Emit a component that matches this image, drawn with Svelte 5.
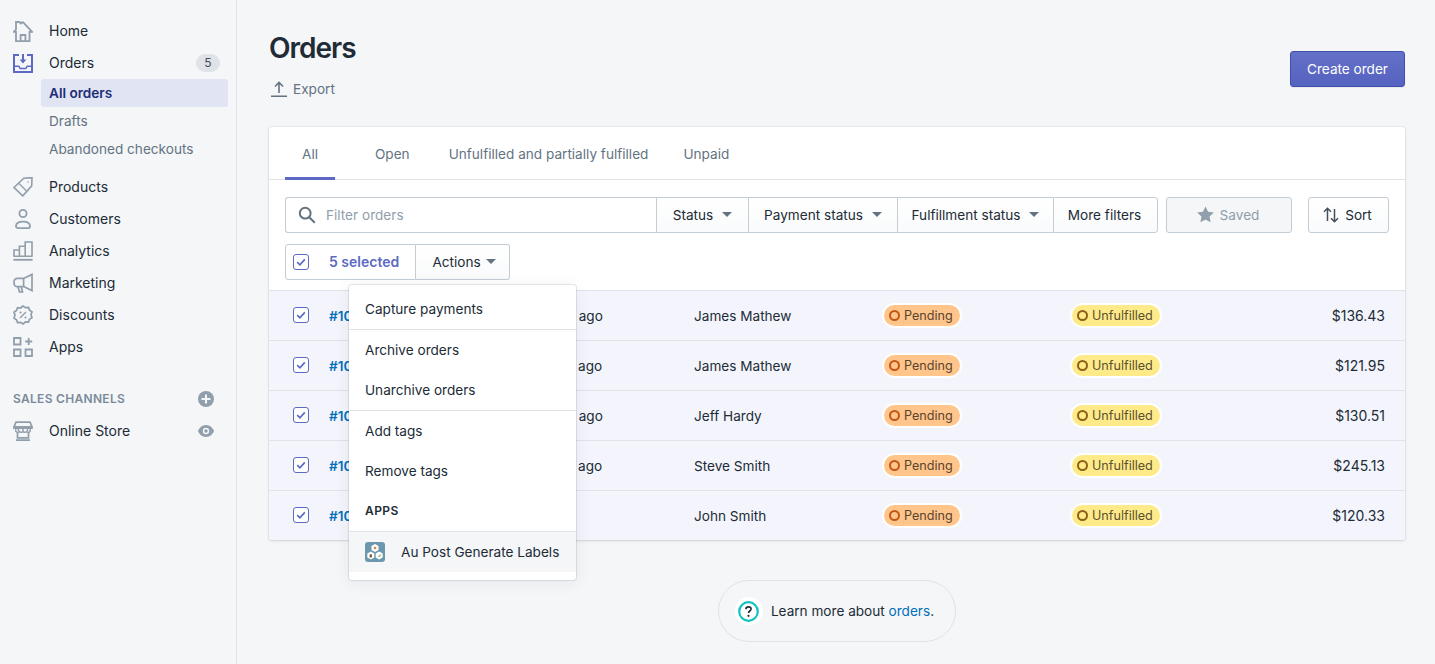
<script lang="ts">
  const orders = [
    { id: "#1005", date: "an hour ago", customer: "James Mathew", total: "$136.43" },
    { id: "#1004", date: "18 mins ago", customer: "James Mathew", total: "$121.95" },
    { id: "#1003", date: "an hour ago", customer: "Jeff Hardy", total: "$130.51" },
    { id: "#1002", date: "18 mins ago", customer: "Steve Smith", total: "$245.13" },
    { id: "#1001", date: "now", customer: "John Smith", total: "$120.33" },
  ];

  const tabs = ["All", "Open", "Unfulfilled and partially fulfilled", "Unpaid"];
  const filters = ["Status", "Payment status", "Fulfillment status"];
</script>

{#snippet check()}
  <span class="checkbox">
    <svg viewBox="0 0 16 16" width="16" height="16" fill="none">
      <path d="M4.2 8.2l2.7 2.6 4.9-5.4" stroke="#5c6ac4" stroke-width="1.7" />
    </svg>
  </span>
{/snippet}

{#snippet caret()}
  <svg class="caret" viewBox="0 0 10 5" width="10" height="5"><path d="M0 0h10L5 5z" fill="#637381" /></svg>
{/snippet}

<div class="page">
  <nav class="sidebar">
    <a class="nav-item">
      <svg viewBox="0 0 20 21" width="20" height="21" fill="none" stroke="#919eab" stroke-width="1.8">
        <path d="M.8 10.800L3 8.400V1h3.400l1.400 1.400.9-.9h1.600l8.800 9.300h-2.600v9.300H3V10.800H.8z" />
        <path d="M7.600 20v-6h4.800v6" />
      </svg>
      <span>Home</span>
    </a>
    <a class="nav-item">
      <svg viewBox="0 0 20 20" width="20" height="20" fill="none">
        <path d="M6 2H1v17h18V2h-5" stroke="#5c6ac4" stroke-width="2" />
        <path d="M1 12.500h5.200l1.400 2.300h4.800l1.400-2.300H19V14h-4.400l-1.400 2.300H6.800L5.400 14H1z" fill="#5c6ac4" />
        <path d="M10 1v7" stroke="#5c6ac4" stroke-width="2" />
        <path d="M6.600 6.600L10 10.400l3.400-3.800z" fill="#5c6ac4" />
      </svg>
      <span>Orders</span>
      <span class="count">5</span>
    </a>
    <div class="subnav">
      <a class="sub-item active">All orders</a>
      <a class="sub-item">Drafts</a>
      <a class="sub-item">Abandoned checkouts</a>
    </div>
    <a class="nav-item">
      <svg viewBox="0 0 20 20" width="20" height="20" fill="none" stroke="#919eab" stroke-width="1.6">
        <path d="M1 10.500L10.800 1.200l8.200-.6-.3 8.300-8.900 10z" />
        <path d="M6 6.500l7.500 7.500" stroke-width="1.200" />
        <circle cx="15" cy="5" r=".8" fill="#919eab" stroke="none" />
      </svg>
      <span>Products</span>
    </a>
    <a class="nav-item">
      <svg viewBox="0 0 20 20" width="20" height="20" fill="none" stroke="#919eab" stroke-width="1.800">
        <circle cx="10" cy="4.500" r="3.600" />
        <path d="M3 17.200c0-3 3-4.600 7-4.600s7 1.600 7 4.600c0 1.300-1 1.900-2 1.900H5c-1 0-2-.6-2-1.900z" />
      </svg>
      <span>Customers</span>
    </a>
    <a class="nav-item">
      <svg viewBox="0 0 20 20" width="20" height="20" fill="none" stroke="#919eab" stroke-width="1.600">
        <path d="M1 15.200V9h5.400v6.200M6.400 15.200V5.200h5.800v10M12.200 15.200V1h6.800v14.200M.4 15.200h19.200" />
        <path d="M.4 18.800h19.200" stroke-width="1.800" />
      </svg>
      <span>Analytics</span>
    </a>
    <a class="nav-item">
      <svg viewBox="0 0 20 20" width="20" height="20" fill="none" stroke="#919eab" stroke-width="1.700">
        <path d="M19 1.400v16.200l-8.400-4H4.400A3.400 3.400 0 0 1 1 10.200V8.800a3.400 3.400 0 0 1 3.400-3.400h6.200z" />
        <path d="M10.600 5.400v8.200M5 13.800l1.500 5h3l-1.200-5" />
      </svg>
      <span>Marketing</span>
    </a>
    <a class="nav-item">
      <svg viewBox="0 0 20 20" width="20" height="20" fill="none" stroke="#919eab" stroke-width="1.700">
        <path d="M10 1l2.500 1.600 3-.3 1 2.800 2.500 1.700-1 2.900 1 2.900-2.500 1.700-1 2.800-3-.3L10 19l-2.500-1.700-3 .3-1-2.800L1 13.100l1-3-1-2.900 2.500-1.700 1-2.800 3 .3z" />
        <path d="M7 13l6-6" stroke-width="1.500" />
        <circle cx="7.500" cy="7.500" r="1.100" fill="#919eab" stroke="none" />
        <circle cx="12.500" cy="12.500" r="1.100" fill="#919eab" stroke="none" />
      </svg>
      <span>Discounts</span>
    </a>
    <a class="nav-item">
      <svg viewBox="0 0 20 20" width="20" height="20" fill="none" stroke="#919eab" stroke-width="1.800">
        <path d="M1 1h6.500v6.500H1zM1 12.500h6.500V19H1zM12.500 12.500H19V19h-6.500z" />
        <path d="M15.700 1v7M12.200 4.500h7" />
      </svg>
      <span>Apps</span>
    </a>
    <div class="channels">
      <span>SALES CHANNELS</span>
      <svg viewBox="0 0 16 16" width="16" height="16">
        <circle cx="8" cy="8" r="8" fill="#919eab" />
        <path d="M8 3.500v9M3.500 8h9" stroke="#f4f6f8" stroke-width="2" />
      </svg>
    </div>
    <a class="nav-item">
      <svg viewBox="0 0 20 20" width="20" height="20" fill="none" stroke="#919eab" stroke-width="1.700">
        <path d="M3 1.200h14l2 4.600v1.400H1V5.800zM1 5.800h18" />
        <path d="M5.500 7v3M10 7v3M14.500 7v3M2.800 7.200v3.300c1.400 1 2.800 1 3.600 0 1.100 1 2.500 1 3.600 0 1.100 1 2.500 1 3.600 0 .8 1 2.200 1 3.600 0V7.200" stroke-width="1.400" />
        <path d="M4.500 11v5.800h11V11M3 19.100h14" />
      </svg>
      <span>Online Store</span>
      <svg class="eye" viewBox="0 0 16 12" width="16" height="12">
        <path d="M8 0c3.800 0 6.800 2.800 8 6-1.200 3.200-4.200 6-8 6S1.200 9.200 0 6c1.200-3.200 4.200-6 8-6z" fill="#919eab" />
        <circle cx="8" cy="6" r="3.200" fill="#f4f6f8" />
        <circle cx="8" cy="6" r="1.700" fill="#919eab" />
      </svg>
    </a>
  </nav>

  <main class="main">
    <header class="page-header">
      <div>
        <h1>Orders</h1>
        <a class="export">
          <svg viewBox="0 0 16 16" width="16" height="16" fill="none" stroke="#637381" stroke-width="1.600">
            <path d="M8 12V2M4 5.500L8 1.500l4 4M0 15.200h16" />
          </svg>
          Export
        </a>
      </div>
      <button class="primary">Create order</button>
    </header>

    <section class="card">
      <div class="tabs">
        {#each tabs as tab, i}
          <a class="tab" class:current={i === 0}>{tab}</a>
        {/each}
      </div>

      <div class="filters">
        <div class="filter-group">
          <div class="search">
            <svg viewBox="0 0 18 18" width="18" height="18" fill="none" stroke="#637381" stroke-width="2">
              <circle cx="7.200" cy="7.200" r="5.400" />
              <path d="M11.200 11.200l5.600 5.600" />
            </svg>
            <span>Filter orders</span>
          </div>
          {#each filters as f}
            <button class="filter">{f}{@render caret()}</button>
          {/each}
          <button class="filter more">More filters</button>
        </div>
        <button class="saved">
          <svg viewBox="0 0 18 18" width="17" height="17"><path d="M9 .5l2.700 5.600 6.100.8-4.500 4.300 1.100 6.100L9 14.400l-5.400 2.900 1.100-6.100L.2 6.900l6.100-.8z" fill="#919eab" /></svg>
          Saved
        </button>
        <button class="sort">
          <svg viewBox="0 0 16 16" width="16" height="16" fill="none" stroke="#454f5b" stroke-width="1.500">
            <path d="M4.500 14V1.500M1 4.800l3.500-3.500L8 4.800M11.500 2v12.500M8 11.200l3.500 3.500 3.500-3.500" />
          </svg>
          Sort
        </button>
      </div>

      <div class="bulk-row">
        <div class="bulk">
          <label class="bulk-check">
            {@render check()}
            <span>5 selected</span>
          </label>
          <button class="actions">Actions{@render caret()}</button>
        </div>
      </div>

      <div class="table">
        {#each orders as o}
          <div class="row">
            <span class="cell-check">{@render check()}</span>
            <a class="order-id">{o.id}</a>
            <span>{o.date}</span>
            <span>{o.customer}</span>
            <span><span class="badge pending"><i></i>Pending</span></span>
            <span><span class="badge unfulfilled"><i></i>Unfulfilled</span></span>
            <span class="total">{o.total}</span>
          </div>
        {/each}
      </div>

      <div class="menu">
        <div class="menu-section">
          <a class="menu-item">Capture payments</a>
        </div>
        <div class="menu-section">
          <a class="menu-item">Archive orders</a>
          <a class="menu-item">Unarchive orders</a>
        </div>
        <div class="menu-section">
          <a class="menu-item">Add tags</a>
          <a class="menu-item">Remove tags</a>
          <div class="menu-title">APPS</div>
        </div>
        <a class="menu-item app">
          <svg viewBox="0 0 20 20" width="20" height="20">
            <rect width="20" height="20" rx="3" fill="#6c98ad" />
            <path d="M10 2l3.500 2v4L10 10 6.500 8V4z" fill="#fff" />
            <path d="M5.800 9.500l3.500 2v4l-3.500 2-3.500-2v-4z" fill="#fff" />
            <path d="M14.200 9.500l3.500 2v4l-3.500 2-3.500-2v-4z" fill="#fff" />
            <path d="M8.800 4.800h2.400v2.400H8.800z" fill="#d98a3c" />
            <path d="M4.600 12.400h2.400v3H4.600z" fill="#7a5a44" />
            <path d="M13 14.500l2.400-2.200.8.800-2.400 2.200z" fill="#6fb56a" />
          </svg>
          Au Post Generate Labels
        </a>
      </div>
    </section>

    <div class="footer">
      <div class="help">
        <span class="help-icon">
          <svg viewBox="0 0 21 21" width="21" height="21" fill="none">
            <circle cx="10.500" cy="10.500" r="9.300" stroke="#12c2c0" stroke-width="2.200" />
            <path d="M7.900 8.300c0-1.500 1.100-2.400 2.600-2.400s2.600.9 2.600 2.200c0 1.900-2.600 1.900-2.600 3.800" stroke="#212b36" stroke-width="1.600" />
            <circle cx="10.500" cy="14.800" r="1.100" fill="#212b36" />
          </svg>
        </span>
        <span>Learn more about <a class="link">orders</a>.</span>
      </div>
    </div>
  </main>
</div>

<style>
  :global(body) {
    margin: 0;
    background: #f4f6f8;
    color: #212b36;
    font-family: Inter, "Liberation Sans", sans-serif;
    font-size: 13.6px;
  }

  .page {
    display: flex;
    height: 664px;
    overflow: hidden;
  }

  .sidebar {
    width: 236px;
    flex-shrink: 0;
    border-right: 1px solid #dfe3e8;
    padding-top: 15px;
  }

  .nav-item {
    display: flex;
    align-items: center;
    height: 32px;
    padding: 0 16px 0 13px;
    gap: 16px;
    font-size: 14px;
  }

  .nav-item span {
    padding-bottom: 1px;
  }

  .nav-item .eye {
    margin-left: auto;
    margin-right: 6px;
  }

  .nav-item .count {
    margin-left: auto;
    padding: 0;
    background: #dfe3e8;
    color: #454f5b;
    font-size: 12px;
    width: 24px;
    height: 18px;
    line-height: 18px;
    text-align: center;
    border-radius: 9px;
  }

  .subnav {
    padding: 0 8px 8px 41px;
  }

  .sub-item {
    display: block;
    height: 28px;
    line-height: 28px;
    padding-left: 8px;
    color: #637381;
    border-radius: 3px;
  }

  .sub-item.active {
    background: #e1e4f2;
    color: #202e78;
    font-weight: 600;
  }

  .channels {
    display: flex;
    align-items: center;
    justify-content: space-between;
    margin-top: 20px;
    padding: 0 22px 0 13px;
    height: 32px;
    font-size: 12px;
    font-weight: 600;
    letter-spacing: 0.3px;
    color: #7b8a9b;
  }

  .channels span {
    padding-bottom: 1px;
  }

  .main {
    flex: 1;
    padding: 0 30px 0 32px;
  }

  .page-header {
    display: flex;
    justify-content: space-between;
    align-items: flex-start;
    height: 127px;
  }

  h1 {
    margin: 31px 0 0;
    font-size: 28px;
    line-height: 34px;
    font-weight: 600;
    letter-spacing: -1px;
  }

  .export {
    display: flex;
    align-items: center;
    gap: 6px;
    margin: 14px 0 0 2px;
    height: 20px;
    color: #637381;
  }

  button {
    font: inherit;
    color: inherit;
    cursor: pointer;
  }

  .primary {
    margin-top: 51px;
    width: 115px;
    height: 36px;
    padding: 0 0 1px;
    border: 1px solid #3f4eae;
    border-radius: 3px;
    color: #fff;
    background: linear-gradient(180deg, #6371c7, #5563c1);
    box-shadow: 0 1px 0 rgba(22, 29, 37, 0.05);
  }

  .card {
    position: relative;
    background: #fff;
    border-radius: 3px;
    box-shadow: 0 0 0 1px rgba(63, 63, 68, 0.05), 0 1px 3px rgba(63, 63, 68, 0.15);
  }

  .tabs {
    display: flex;
    height: 52px;
    padding-left: 16px;
    border-bottom: 1px solid #dfe3e8;
  }

  .tab {
    position: relative;
    display: flex;
    align-items: center;
    justify-content: center;
    margin-right: 23px;
    padding: 2px 17px 0;
    color: #637381;
  }

  .tab:nth-child(2) {
    margin-right: 5px;
  }

  .tab:nth-child(3) {
    margin-right: 1px;
  }

  .tab.current::after {
    content: "";
    position: absolute;
    left: 0;
    right: 0;
    bottom: -1px;
    height: 3px;
    background: #5c6ac4;
  }

  .filters {
    display: flex;
    padding: 17px 16px 0;
  }

  .filter-group {
    display: grid;
    grid-template-columns: 1fr 92px 149px 156px 105px;
    height: 36px;
    width: 873px;
    flex-shrink: 0;
  }

  .search {
    display: flex;
    align-items: center;
    gap: 10px;
    padding-left: 12px;
    border: 1px solid #c4cdd5;
    border-right: 0;
    border-radius: 3px 0 0 3px;
    color: #919eab;
  }

  .filter {
    display: flex;
    align-items: center;
    justify-content: center;
    gap: 9px;
    padding: 0 0 1px;
    border: 1px solid #c4cdd5;
    border-right: 0;
    background: linear-gradient(180deg, #fff, #f9fafb);
    white-space: nowrap;
  }

  .filter.more {
    padding-right: 2px;
    border-right: 1px solid #c4cdd5;
    border-radius: 0 3px 3px 0;
  }

  .caret {
    flex-shrink: 0;
  }

  .saved {
    display: flex;
    align-items: center;
    justify-content: center;
    gap: 6px;
    width: 126px;
    height: 36px;
    margin-left: 8px;
    padding: 0 2px 1px 0;
    border: 1px solid #c4cdd5;
    border-radius: 3px;
    background: #f4f6f8;
    color: #919eab;
  }

  .sort {
    display: flex;
    align-items: center;
    justify-content: center;
    gap: 6px;
    width: 81px;
    height: 36px;
    margin-left: 16px;
    padding: 0 2px 1px 0;
    border: 1px solid #c4cdd5;
    border-radius: 3px;
    background: linear-gradient(180deg, #fff, #f9fafb);
  }

  .bulk-row {
    padding: 11px 16px 10px;
  }

  .bulk {
    display: flex;
    height: 36px;
  }

  .bulk-check {
    display: flex;
    align-items: center;
    width: 131px;
    box-sizing: border-box;
    padding-left: 7px;
    gap: 20px;
    border: 1px solid #c4cdd5;
    border-radius: 3px 0 0 3px;
    color: #5c6ac4;
    font-weight: 600;
    font-size: 14px;
  }

  .bulk-check span:last-child {
    padding-bottom: 1px;
  }

  .actions {
    display: flex;
    align-items: center;
    justify-content: center;
    gap: 5px;
    width: 94px;
    padding: 0 0 1px 3px;
    border: 1px solid #c4cdd5;
    border-left: 0;
    border-radius: 0 3px 3px 0;
    background: linear-gradient(180deg, #fff, #f9fafb);
  }

  .checkbox {
    display: block;
    box-sizing: border-box;
    width: 16px;
    height: 16px;
    border: 1px solid #5c6ac4;
    border-radius: 3px;
    background: #fff;
    overflow: hidden;
  }

  .checkbox svg {
    display: block;
    margin: -1px;
  }

  .table {
    border-top: 1px solid #dfe3e8;
  }

  .row {
    display: grid;
    grid-template-columns: 60px 197px 168px 190px 188px 1fr 120px;
    align-items: center;
    height: 49px;
    background: #f4f5fc;
    border-bottom: 1px solid #dfe3e8;
  }

  .row:last-child {
    border-bottom: 0;
    border-radius: 0 0 3px 3px;
  }

  .cell-check {
    padding: 0 0 1px 24px;
  }

  .order-id {
    color: #006fbb;
    font-weight: 600;
  }

  .badge {
    display: inline-flex;
    align-items: center;
    gap: 4px;
    height: 21px;
    padding: 0 7px 0 5px;
    border-radius: 10.500px;
    box-shadow: 0 0 0 2px #fff;
    font-size: 12.600px;
  }

  .badge i {
    box-sizing: border-box;
    width: 11px;
    height: 11px;
    border-radius: 50%;
    border: 2px solid;
  }

  .pending {
    background: #ffc58b;
    color: #594430;
  }

  .pending i {
    border-color: #c05717;
  }

  .unfulfilled {
    background: #ffea8a;
    color: #595130;
  }

  .unfulfilled i {
    border-color: #8a6116;
  }

  .total {
    text-align: right;
    padding-right: 20px;
    font-size: 14px;
  }

  .menu {
    position: absolute;
    left: 80px;
    top: 158px;
    width: 227px;
    padding-bottom: 8px;
    background: #fff;
    border-radius: 3px;
    box-shadow: 0 0 0 1px rgba(6, 44, 82, 0.1), 0 2px 16px rgba(33, 43, 54, 0.08);
  }

  .menu-section {
    border-bottom: 1px solid #dfe3e8;
  }

  .menu-section:first-child {
    padding-top: 4px;
  }

  .menu-item {
    display: flex;
    align-items: center;
    height: 40px;
    padding: 0 16px;
    white-space: nowrap;
  }

  .menu-item.app {
    gap: 16px;
    background: #f4f6f8;
  }

  .menu-title {
    height: 40px;
    line-height: 39px;
    padding-left: 16px;
    font-size: 12px;
    font-weight: 600;
    letter-spacing: 0.4px;
  }

  .footer {
    display: flex;
    justify-content: center;
    margin-top: 40px;
  }

  .help {
    display: flex;
    align-items: center;
    gap: 8px;
    height: 62px;
    box-sizing: border-box;
    padding: 0 21px 0 16px;
    border: 1px solid #dfe3e8;
    border-radius: 31px;
  }

  .help-icon {
    display: flex;
    align-items: center;
    justify-content: center;
    width: 28px;
    height: 28px;
    border-radius: 50%;
    background: #fff;
  }

  .link {
    color: #006fbb;
  }
</style>
